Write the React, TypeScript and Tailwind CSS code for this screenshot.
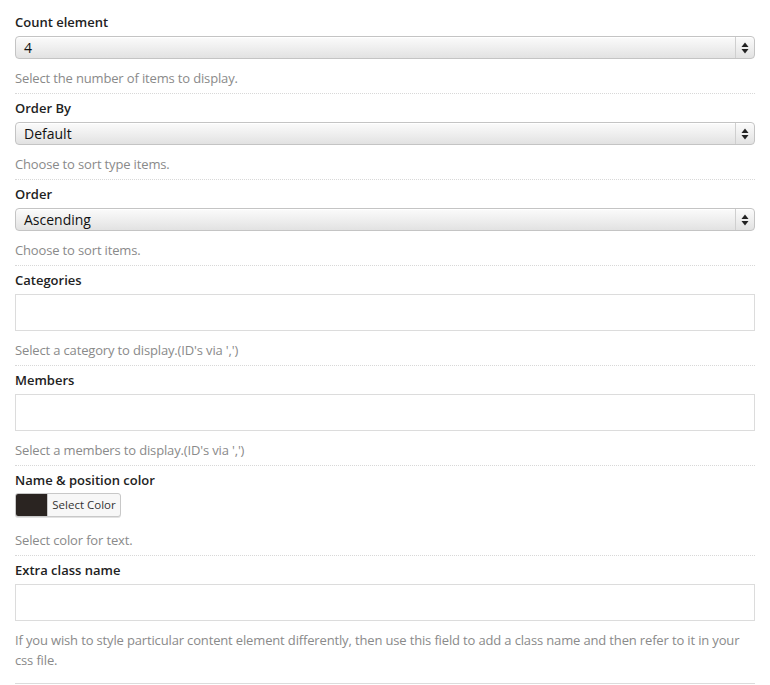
import { ReactNode } from "react";

function Arrows() {
	return (
		<svg width="8" height="12" viewBox="0 0 8 12" className="text-[#222]">
			<path d="M4 0.5 L7.5 5 L0.5 5 Z" fill="currentColor" />
			<path d="M4 11.5 L7.5 7 L0.5 7 Z" fill="currentColor" />
		</svg>
	);
}

function FakeSelect({ value }: { value: string }) {
	return (
		<div className="mt-[5px] flex h-[23px] w-full items-stretch rounded-[4px] border border-[#c4c4c4] bg-gradient-to-b from-[#fbfbfb] via-[#efefef] to-[#e2e2e2] shadow-[inset_0_1px_0_#fff]">
			<span className="flex flex-1 items-center pl-[8px] text-[14px] text-[#111]">{value}</span>
			<span className="flex w-[19px] items-center justify-center border-l border-[#cfcfcf]">
				<Arrows />
			</span>
		</div>
	);
}

function Field({
	label,
	desc,
	children,
	last,
	descGap = "mt-[9px]",
}: {
	label: string;
	desc: string;
	children: ReactNode;
	last?: boolean;
	descGap?: string;
}) {
	return (
		<div
			className={
				last
					? "border-b border-[#dcdcdc] pt-[5px] pb-[13px]"
					: "border-b border-dotted border-[#d8d8d8] pt-[5px] pb-[5px]"
			}
		>
			<div className="text-[13px] leading-[18px] font-semibold text-[#222]">{label}</div>
			{children}
			<p className={`${descGap} text-[13px] leading-[20px] tracking-[-0.15px] text-[#8a8a8a]`}>{desc}</p>
		</div>
	);
}

function TextBox() {
	return <div className="mt-[5px] h-[37px] w-full border border-[#dcdcdc] bg-white" />;
}

export default function App() {
	return (
		<div
			className="w-[770px] bg-white px-[15px] pt-[8px]"
			style={{ fontFamily: '"Open Sans", "Liberation Sans", sans-serif' }}
		>
			<Field label="Count element" desc="Select the number of items to display.">
				<FakeSelect value="4" />
			</Field>
			<Field label="Order By" desc="Choose to sort type items.">
				<FakeSelect value="Default" />
			</Field>
			<Field label="Order" desc="Choose to sort items.">
				<FakeSelect value="Ascending" />
			</Field>
			<Field label="Categories" desc="Select a category to display.(ID's via ',')">
				<TextBox />
			</Field>
			<Field label="Members" desc="Select a members to display.(ID's via ',')">
				<TextBox />
			</Field>
			<Field label="Name & position color" desc="Select color for text." descGap="mt-[13px]">
				<div className="mt-[4px] flex h-[24px] w-[106px] overflow-hidden rounded-[3px] border border-[#c8c8c8] bg-[#f7f7f7] shadow-[0_1px_0_#e2e2e2]">
					<span className="w-[31px] bg-[#2a2421]" />
					<span className="flex flex-1 items-center justify-center border-l border-[#c8c8c8] text-[11.5px] text-[#333]">
						Select Color
					</span>
				</div>
			</Field>
			<Field
				label="Extra class name"
				desc="If you wish to style particular content element differently, then use this field to add a class name and then refer to it in your css file."
				last
			>
				<TextBox />
			</Field>
		</div>
	);
}
